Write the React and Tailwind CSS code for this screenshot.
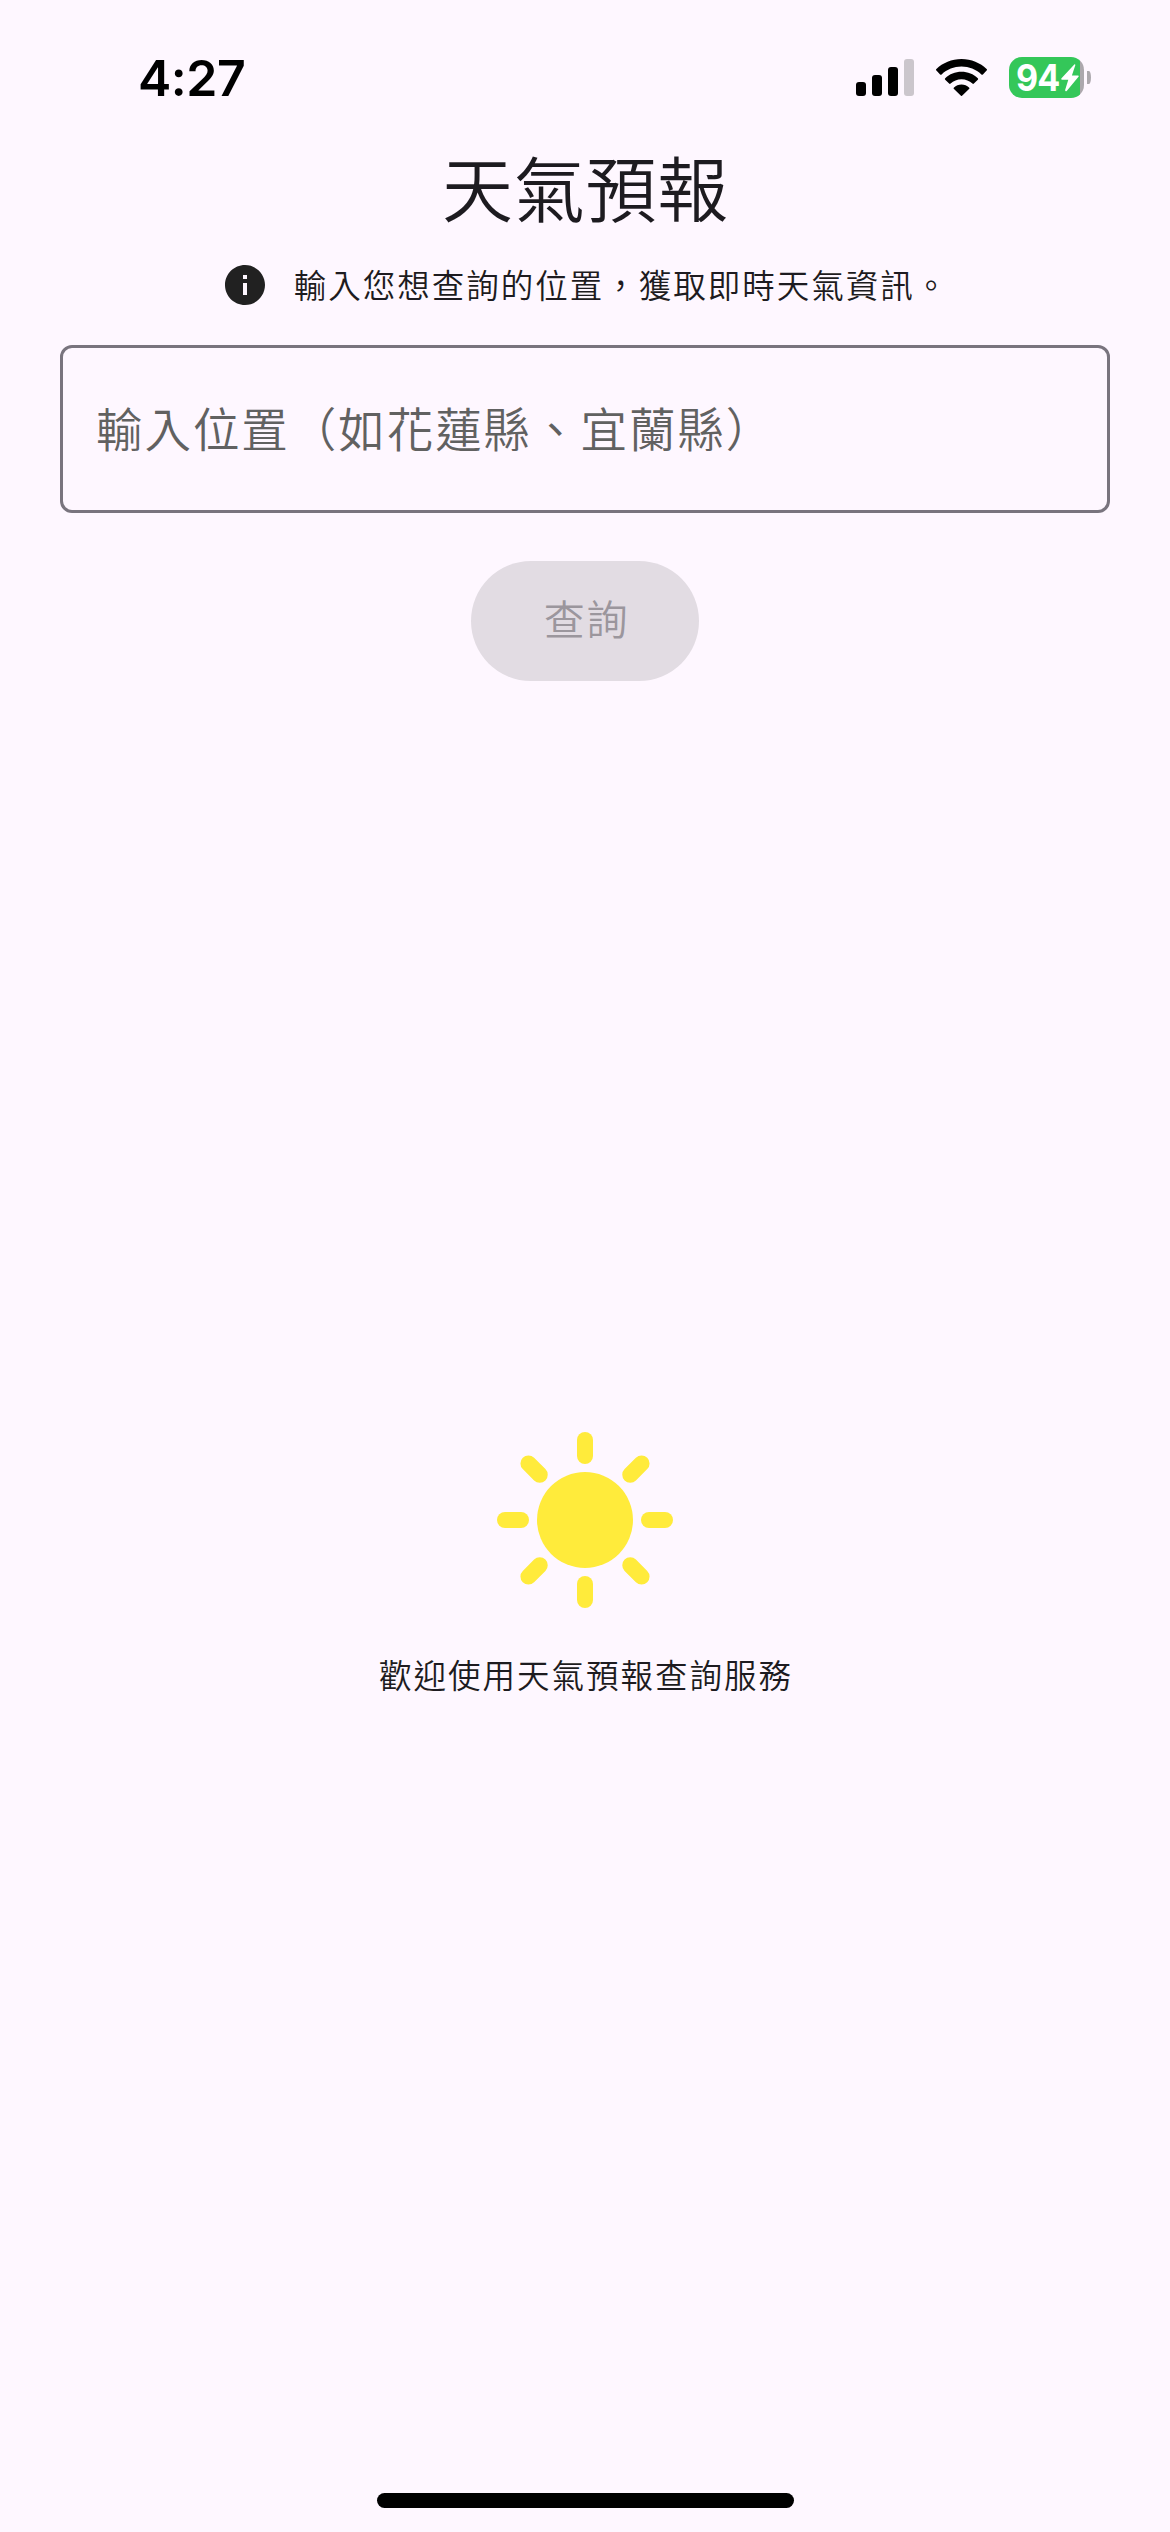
function StatusBar() {
  return (
    <header className="flex h-[141px] items-start justify-between pr-[79px] pl-[138px] text-black">
      <div className="mt-[48px] font-['Inter',sans-serif] text-[50px] leading-[60px] font-semibold tracking-[-0.5px]">
        4:27
      </div>
      <div className="mt-[57px] flex items-start">
        <div className="mt-[2px] flex h-[37px] items-end gap-[6px]">
          <span className="h-[14px] w-[10px] rounded-[3px] bg-black" />
          <span className="h-[21px] w-[10px] rounded-[3px] bg-black" />
          <span className="h-[29px] w-[10px] rounded-[3px] bg-black" />
          <span className="h-[37px] w-[10px] rounded-[3px] bg-[#cbc6cc]" />
        </div>
        <svg className="mt-[2px] ml-[22px] h-[37px] w-[51px]" viewBox="0 0 51 37" fill="black">
          <path d="M25.5 0C35.3 0 44.3 3.8 50.6 10.1a1 1 0 0 1 0 1.5L46.9 15.4a1 1 0 0 1-1.5 0C40 10.4 33 7.5 25.5 7.5S11 10.4 5.6 15.4a1 1 0 0 1-1.5 0L.4 11.6a1 1 0 0 1 0-1.5C6.7 3.8 15.7 0 25.5 0Z" />
          <path d="M25.5 12.8c6.3 0 12 2.4 16.3 6.4a1 1 0 0 1 0 1.5l-3.9 3.9a1 1 0 0 1-1.5 0c-2.9-2.7-6.7-4.3-10.9-4.3s-8 1.6-10.9 4.3a1 1 0 0 1-1.5 0l-3.9-3.9a1 1 0 0 1 0-1.5c4.3-4 10-6.4 16.3-6.4Z" />
          <path d="M25.5 25.5c2.9 0 5.5 1.1 7.5 2.9a1 1 0 0 1 0 1.5l-6.7 6.7a1.1 1.1 0 0 1-1.6 0L18 29.9a1 1 0 0 1 0-1.5c2-1.8 4.6-2.9 7.5-2.9Z" />
        </svg>
        <div className="ml-[22px] flex items-center">
          <div className="flex h-[41px] w-[75px] items-center rounded-[13px] bg-[linear-gradient(to_right,#34c759_71px,#aca8ad_71px)] pl-[7px]">
            <span className="w-[45px] origin-left scale-x-[0.92] font-['Inter',sans-serif] text-[37px] leading-[41px] font-bold tracking-[-1px] text-white">
              94
            </span>
            <svg className="h-[28px] w-[18px]" viewBox="0 0 18 28" fill="white">
              <path d="M13.3.5.5 14.3c-.6.8-.3 1.4.6 1.4h6.2L4.2 25.8c-.3 1.4.6 2 1.5 1.1L17.5 12.8c.6-.8.3-1.4-.6-1.4h-6L14.3 1.3c.2-.9-.4-1.3-1-.8Z" />
            </svg>
          </div>
          <span className="ml-[3px] h-[13px] w-[4px] rounded-r-[100%] bg-[#aca8ad]" />
        </div>
      </div>
    </header>
  );
}

function InfoIcon() {
  return (
    <svg className="size-12" viewBox="0 0 24 24" fill="#212121">
      <path d="M12 2C6.48 2 2 6.48 2 12s4.48 10 10 10 10-4.48 10-10S17.52 2 12 2Zm1 15h-2v-6h2v6Zm0-8h-2V7h2v2Z" />
    </svg>
  );
}

function Sun() {
  return (
    <svg className="size-[192px]" viewBox="0 0 24 24" fill="#ffeb3b">
      <circle cx="12" cy="12" r="6" />
      {[0, 45, 90, 135, 180, 225, 270, 315].map((angle) => (
        <rect
          key={angle}
          x="11"
          y="1"
          width="2"
          height="4"
          rx="1"
          transform={`rotate(${angle} 12 12)`}
        />
      ))}
    </svg>
  );
}

export default function App() {
  return (
    <div
      lang="zh-Hant-TW"
      className="flex h-[2532px] w-[1170px] flex-col bg-[#fef7ff] font-['Noto_Sans_CJK_TC',sans-serif] font-[350] text-[#1d1b20]"
    >
      <StatusBar />
      <main className="flex flex-1 flex-col items-center">
        <h1 className="h-[96px] pl-[1px] text-[71px] leading-[89px] font-[350] tracking-[0.7px]">
          天氣預報
        </h1>
        <div className="mt-6 flex h-[48px] items-center gap-[25px]">
          <InfoIcon />
          <p className="pb-[3px] text-[32.5px] leading-[44px] tracking-[2px] whitespace-nowrap">
            輸入您想查詢的位置，獲取即時天氣資訊。
          </p>
        </div>
        <div className="mt-[36px] flex h-[168px] w-[1050px] items-center rounded-[12px] border-3 border-[#79747e] pb-[5px] pl-[33px] text-[46.5px] tracking-[1.95px] text-[#616161]">
          輸入位置（如花蓮縣、宜蘭縣）
        </div>
        <button className="mt-12 h-[120px] w-[228px] rounded-full bg-[#e2dce3] pb-[6px] pl-[3px] text-[41px] tracking-[1.7px] text-[#9b969d]">
          查詢
        </button>
        <section className="mt-[743px] flex flex-col items-center">
          <Sun />
          <p className="mt-[34px] pl-[2px] text-[32.5px] leading-[48px] tracking-[2px]">
            歡迎使用天氣預報查詢服務
          </p>
        </section>
      </main>
      <div className="mb-[24px] ml-[377px] h-[15px] w-[417px] rounded-full bg-black" />
    </div>
  );
}
